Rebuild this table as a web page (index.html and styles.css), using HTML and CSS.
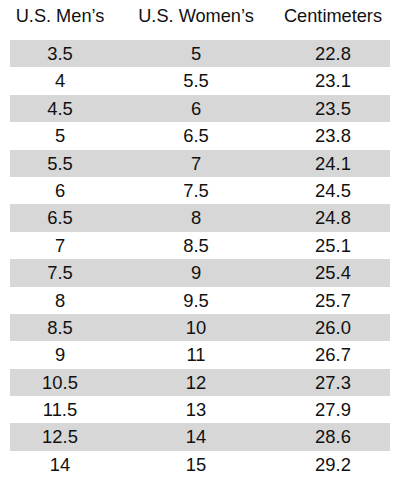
FILE: index.html
```html
<!DOCTYPE html>
<html lang="en">
<head>
<meta charset="utf-8">
<title>Shoe Size Chart</title>
<link rel="stylesheet" href="styles.css">
</head>
<body>
<div class="chart">
  <div class="row head">
    <div class="cell">U.S. Men’s</div>
    <div class="cell">U.S. Women’s</div>
    <div class="cell">Centimeters</div>
  </div>
  <div class="body">
    <div class="row"><div class="cell">3.5</div><div class="cell">5</div><div class="cell">22.8</div></div>
    <div class="row"><div class="cell">4</div><div class="cell">5.5</div><div class="cell">23.1</div></div>
    <div class="row"><div class="cell">4.5</div><div class="cell">6</div><div class="cell">23.5</div></div>
    <div class="row"><div class="cell">5</div><div class="cell">6.5</div><div class="cell">23.8</div></div>
    <div class="row"><div class="cell">5.5</div><div class="cell">7</div><div class="cell">24.1</div></div>
    <div class="row"><div class="cell">6</div><div class="cell">7.5</div><div class="cell">24.5</div></div>
    <div class="row"><div class="cell">6.5</div><div class="cell">8</div><div class="cell">24.8</div></div>
    <div class="row"><div class="cell">7</div><div class="cell">8.5</div><div class="cell">25.1</div></div>
    <div class="row"><div class="cell">7.5</div><div class="cell">9</div><div class="cell">25.4</div></div>
    <div class="row"><div class="cell">8</div><div class="cell">9.5</div><div class="cell">25.7</div></div>
    <div class="row"><div class="cell">8.5</div><div class="cell">10</div><div class="cell">26.0</div></div>
    <div class="row"><div class="cell">9</div><div class="cell">11</div><div class="cell">26.7</div></div>
    <div class="row"><div class="cell">10.5</div><div class="cell">12</div><div class="cell">27.3</div></div>
    <div class="row"><div class="cell">11.5</div><div class="cell">13</div><div class="cell">27.9</div></div>
    <div class="row"><div class="cell">12.5</div><div class="cell">14</div><div class="cell">28.6</div></div>
    <div class="row"><div class="cell">14</div><div class="cell">15</div><div class="cell">29.2</div></div>
  </div>
</div>
</body>
</html>
```
FILE: styles.css
```css
html, body {
  margin: 0;
  padding: 0;
  background: #ffffff;
}
body {
  font-family: "Liberation Sans", Arial, Helvetica, sans-serif;
  color: #111111;
}
.chart {
  width: 380px;
  padding: 3px 10px 0 10px;
}
.row {
  display: grid;
  grid-template-columns: 100px 172px 102px;
  height: 27.4px;
  align-items: center;
}
.cell {
  text-align: center;
  font-size: 18.4px;
  line-height: 27.4px;
  white-space: nowrap;
}
.head {
  margin-bottom: 9.6px;
}
.head .cell {
  font-size: 18.2px;
}
.body .row:nth-child(odd) {
  background: #d7d7d7;
}
```
